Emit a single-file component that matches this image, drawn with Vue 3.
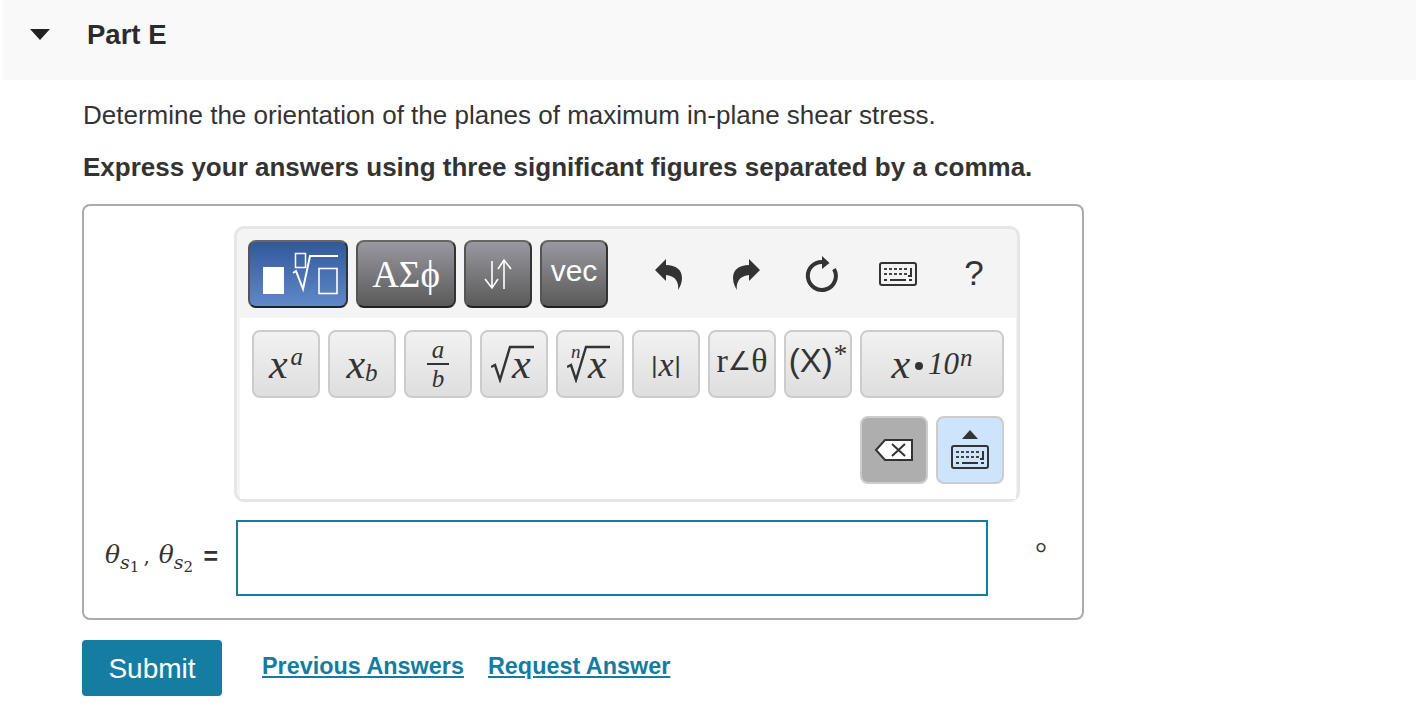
<template>
  <div class="page">
    <div class="part-head">
      <span class="caret"></span>
      <h2 class="part-title">Part E</h2>
    </div>

    <div class="part-body">
      <p class="question">Determine the orientation of the planes of maximum in-plane shear stress.</p>
      <p class="hint">Express your answers using three significant figures separated by a comma.</p>

      <div class="answer-box">
        <div class="editor">
          <div class="toolbar">
            <button class="tab tab--blue">
              <svg width="80" height="50" viewBox="0 0 80 50">
                <rect x="5" y="18" width="21" height="27" fill="#fff" />
                <rect x="37.5" y="4.5" width="10" height="14" fill="none" stroke="#fff" stroke-width="1.5" />
                <path d="M35 24 L38 22 L45 40 L52 7 H80" fill="none" stroke="#fff" stroke-width="2" />
                <rect x="61" y="19.5" width="18" height="25" fill="none" stroke="#fff" stroke-width="1.6" />
              </svg>
            </button>
            <button class="tab tab--greek">ΑΣϕ</button>
            <button class="tab tab--arrows">
              <svg width="30" height="32" viewBox="0 0 30 32">
                <path d="M9 3 V29 M2 21 L9 30 L15 21" fill="none" stroke="#fff" stroke-width="1.6" />
                <path d="M21 31 V3 M15 11 L21 2 L28 11" fill="none" stroke="#fff" stroke-width="1.6" />
              </svg>
            </button>
            <button class="tab tab--vec">vec</button>

            <div class="tools">
              <span class="tool">
                <svg class="undo" width="30" height="34" viewBox="0 0 30 34">
                  <path d="M1 13 L12 2 V8 C22 8 28 13 28 21 C28 26 26 30 24 33 C25 27 23 19 12 18 V24 Z" fill="#333" />
                </svg>
              </span>
              <span class="tool">
                <svg width="30" height="34" viewBox="0 0 30 34">
                  <path d="M29 13 L18 2 V8 C8 8 2 13 2 21 C2 26 4 30 6 33 C5 27 7 19 18 18 V24 Z" fill="#333" />
                </svg>
              </span>
              <span class="tool">
                <svg width="36" height="38" viewBox="0 0 36 38">
                  <path d="M19 7 A14 14 0 1 0 30 14" fill="none" stroke="#333" stroke-width="4" />
                  <path d="M18 1 L25.5 8 L18 14 Z" fill="#333" />
                </svg>
              </span>
              <span class="tool">
                <svg width="38" height="24" viewBox="0 0 38 24">
                  <rect x="1" y="1" width="36" height="22" rx="2" fill="none" stroke="#333" stroke-width="2" />
                  <path d="M5 7 H30 M5 12 H28" fill="none" stroke="#444" stroke-width="2" stroke-dasharray="3 2" />
                  <path d="M32 6 V14 H29 M11 18 H27" fill="none" stroke="#333" stroke-width="2" />
                  <path d="M5 18 H8 M30 18 H33" fill="none" stroke="#333" stroke-width="2" />
                </svg>
              </span>
              <span class="tool tool--help">?</span>
            </div>
          </div>

          <div class="keys">
            <div class="key-row">
              <button class="key"><i class="mi">x</i><sup class="k-sup">a</sup></button>
              <button class="key"><i class="mi">x</i><sub class="k-sub">b</sub></button>
              <button class="key">
                <span class="frac"><i>a</i><i class="frac-b">b</i></span>
              </button>
              <button class="key">
                <span class="root">
                  <svg class="root-sign" width="46" height="38" viewBox="0 0 46 38">
                    <path d="M0 22 L4 20 L9 35 L19 2 H43" fill="none" stroke="#333" stroke-width="2.4" />
                  </svg>
                  <i class="mi root-x">x</i>
                </span>
              </button>
              <button class="key">
                <span class="root">
                  <i class="root-n">n</i>
                  <svg class="root-sign" width="46" height="38" viewBox="0 0 46 38">
                    <path d="M0 22 L4 20 L9 35 L19 2 H43" fill="none" stroke="#333" stroke-width="2.4" />
                  </svg>
                  <i class="mi root-x">x</i>
                </span>
              </button>
              <button class="key key--abs"><span>|</span><i>x</i><span>|</span></button>
              <button class="key key--polar">r<span class="angle">∠</span>θ</button>
              <button class="key key--conj"><span class="conj-x">(X)</span><sup class="conj-star">*</sup></button>
              <button class="key key--wide">
                <i class="mi">x</i><span class="dot"></span><i class="ten">10</i><sup class="ten-n">n</sup>
              </button>
            </div>

            <div class="key-row key-row--end">
              <button class="key key--del">
                <svg width="40" height="24" viewBox="0 0 40 24">
                  <path d="M2 12 L11 2 H38 V22 H11 Z" fill="#fff" stroke="#333" stroke-width="2" />
                  <path d="M18 6 L31 18 M31 6 L18 18" fill="none" stroke="#333" stroke-width="2" />
                </svg>
              </button>
              <button class="key key--kbd">
                <svg width="40" height="42" viewBox="0 0 40 42">
                  <path d="M12 10 L20 1 L28 10 Z" fill="#333" />
                  <rect x="2" y="17" width="36" height="22" rx="2" fill="none" stroke="#333" stroke-width="2" />
                  <path d="M6 23 H31 M6 28 H29" fill="none" stroke="#444" stroke-width="2" stroke-dasharray="3 2" />
                  <path d="M33 22 V30 H30 M12 34 H28" fill="none" stroke="#333" stroke-width="2" />
                  <path d="M6 34 H9 M31 34 H34" fill="none" stroke="#333" stroke-width="2" />
                </svg>
              </button>
            </div>
          </div>
        </div>

        <div class="answer-row">
          <label class="var-label">
            <i>θ</i><sub class="s"><i>s</i><sub class="n">1</sub></sub><span class="comma">,</span>
            <i>θ</i><sub class="s"><i>s</i><sub class="n">2</sub></sub>
            <span class="eq">=</span>
          </label>
          <input class="answer-input" type="text" />
          <span class="unit">°</span>
        </div>
      </div>

      <div class="actions">
        <button class="submit">Submit</button>
        <a class="link" href="#">Previous Answers</a>
        <a class="link" href="#">Request Answer</a>
      </div>
    </div>
  </div>
</template>

<script setup>
</script>

<style>
html, body {
  background: #fff;
}
</style>

<style scoped>
.page {
  font-family: "Liberation Sans", Arial, sans-serif;
  color: #333;
  width: 1416px;
  height: 708px;
  overflow: hidden;
}

.part-head {
  margin-left: 2px;
  height: 80px;
  background: #f9f9f9;
  display: flex;
  align-items: center;
  padding-bottom: 11px;
  box-sizing: border-box;
}

.caret {
  width: 0;
  height: 0;
  margin-left: 28px;
  border-left: 10px solid transparent;
  border-right: 10px solid transparent;
  border-top: 11px solid #222;
}

.part-title {
  margin: 0 0 0 37px;
  font-size: 27.5px;
  font-weight: 700;
  color: #2b2b2b;
}

.part-body {
  padding-left: 82px;
}

.question {
  margin: 20px 0 0 1px;
  font-size: 26px;
  line-height: 30px;
}

.hint {
  margin: 22px 0 0 1px;
  font-size: 26px;
  line-height: 30px;
  font-weight: 700;
}

.answer-box {
  margin-top: 22px;
  width: 1002px;
  height: 416px;
  box-sizing: border-box;
  border: 2px solid #aaa;
  border-radius: 8px;
  padding: 20px 0 0 0;
}

.editor {
  margin-left: 150px;
  width: 786px;
  height: 276px;
  box-sizing: border-box;
  border: 3px solid #e6e6e6;
  border-radius: 10px;
  background: #f4f4f4;
  padding-right: 1px;
  display: flex;
  flex-direction: column;
}

.toolbar {
  height: 89px;
  flex-shrink: 0;
  box-sizing: border-box;
  padding: 11px 0 0 11px;
  display: flex;
  gap: 8px;
}

button {
  font-family: inherit;
  padding: 0;
  margin: 0;
  box-sizing: border-box;
  cursor: pointer;
}

.tab {
  height: 68px;
  border: 2px solid #333;
  border-color: #666 #333 #222 #555;
  border-radius: 8px;
  background: linear-gradient(#98989f, #5a5a5a);
  color: #fff;
  display: flex;
  align-items: center;
  justify-content: center;
}

.tab--blue {
  width: 100px;
  background: linear-gradient(#31589b, #6189c9);
}

.tab--greek {
  width: 100px;
  font-family: "Liberation Serif", serif;
  font-size: 37px;
}

.tab--arrows {
  width: 68px;
}

.tab--vec {
  width: 68px;
  font-size: 30px;
  padding-bottom: 6px;
}

.tools {
  margin-left: 16px;
  display: flex;
  height: 68px;
}

.tool {
  width: 76px;
  display: flex;
  align-items: center;
  justify-content: center;
}

.undo {
  margin-left: -3px;
}

.tool--help {
  font-size: 35px;
  padding-bottom: 2px;
}

.keys {
  flex: 1;
  background: #fff;
  margin-left: 3px;
  padding: 12px 12px 0 12px;
}

.key-row {
  display: flex;
  gap: 8px;
}

.key-row--end {
  margin-top: 18px;
  justify-content: flex-end;
}

.key {
  width: 68px;
  height: 68px;
  border: 2px solid #ccc;
  border-radius: 8px;
  background: linear-gradient(#f2f2f2, #dedede);
  color: #333;
  font-family: "Liberation Serif", serif;
  display: flex;
  align-items: center;
  justify-content: center;
  position: relative;
}

.mi {
  font-size: 42px;
  font-style: italic;
  line-height: 1;
}

.k-sup {
  font-size: 25px;
  font-style: italic;
  line-height: 1;
  margin: -16px 0 0 3px;
}

.k-sub {
  font-size: 25px;
  font-style: italic;
  line-height: 1;
  margin: 16px 0 0 0;
}

.frac {
  display: flex;
  flex-direction: column;
  align-items: center;
  font-size: 25px;
  line-height: 25px;
}

.frac i:first-child {
  border-bottom: 2px solid #333;
  padding: 0 4.5px 1px;
}

.frac-b {
  padding-top: 1px;
}

.root {
  position: relative;
  display: block;
  width: 46px;
  height: 38px;
}

.root-sign {
  position: absolute;
  left: 0;
  top: 0;
}

.root-x {
  position: absolute;
  left: 21px;
  top: -2px;
}

.root-n {
  position: absolute;
  left: 4px;
  top: -3px;
  font-size: 19px;
  line-height: 1;
}

.key--abs {
  font-size: 34px;
  padding-top: 2px;
}

.key--abs span {
  font-family: "Liberation Sans", sans-serif;
  font-size: 24px;
  margin: 0 1px;
}

.key--polar {
  font-size: 34px;
  padding-bottom: 6px;
  white-space: nowrap;
}

.angle {
  font-family: "DejaVu Sans", sans-serif;
  font-size: 26px;
}

.key--conj {
  font-family: "Liberation Sans", sans-serif;
  font-size: 33px;
  padding-bottom: 6px;
}

.conj-star {
  font-family: "Liberation Serif", serif;
  font-size: 27px;
  line-height: 1;
  margin: -14px 0 0 1px;
}

.key--wide {
  width: 144px;
}

.dot {
  width: 8px;
  height: 8px;
  margin: 4px 5px 0;
  border-radius: 50%;
  background: #333;
}

.ten {
  font-size: 31px;
  font-style: italic;
  font-family: "Liberation Serif", serif;
}

.ten-n {
  font-size: 25px;
  font-style: italic;
  line-height: 1;
  margin: -14px 0 0 1px;
}

.key--del {
  background: #aeaeae;
}

.key--kbd {
  background: #cee4fc;
}

.answer-row {
  margin-top: 18px;
  display: flex;
  align-items: center;
}

.var-label {
  width: 152px;
  box-sizing: border-box;
  padding: 0 18px 0 21px;
  font-family: "DejaVu Serif", "Liberation Serif", serif;
  font-size: 25px;
  display: flex;
  align-items: baseline;
  white-space: nowrap;
  padding-bottom: 8px;
}

.s {
  font-size: 19px;
  line-height: 1;
  vertical-align: baseline;
  transform: translateY(6px);
}

.n {
  font-size: 15px;
  font-style: normal;
  vertical-align: baseline;
  display: inline-block;
  transform: translateY(3px);
}

.comma {
  margin: 0 9px 0 4px;
  font-size: 20px;
}

.eq {
  margin-left: auto;
  font-family: "Liberation Sans", sans-serif;
  font-size: 25px;
  font-weight: 700;
  transform: translateY(2px);
}

.answer-input {
  width: 752px;
  height: 76px;
  box-sizing: border-box;
  border: 2px solid #147c9f;
  border-radius: 0;
  outline: none;
  background: #fff;
}

.unit {
  margin-left: 47px;
  font-family: "Liberation Serif", serif;
  font-size: 30px;
  line-height: 1;
  padding-bottom: 10px;
}

.actions {
  margin-top: 20px;
  display: flex;
  align-items: center;
}

.submit {
  width: 140px;
  height: 56px;
  background: #147da1;
  border: none;
  border-radius: 4px;
  color: #fff;
  font-size: 28px;
  padding-top: 2px;
  margin-right: 40px;
}

.link {
  font-size: 23.4px;
  font-weight: 700;
  color: #147c9f;
  text-decoration: underline;
  margin-right: 24px;
  padding-bottom: 4px;
}
</style>
